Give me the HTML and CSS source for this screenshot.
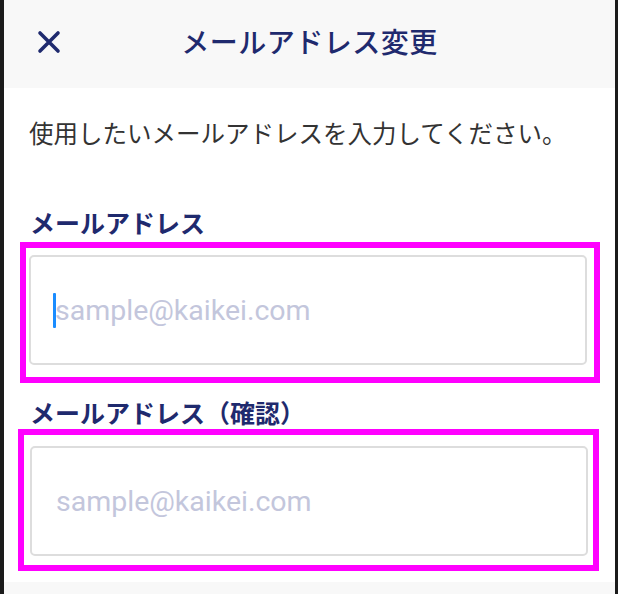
FILE: index.html
```html
<!DOCTYPE html>
<html lang="ja">
  <head>
    <meta charset="UTF-8" />
    <meta name="viewport" content="width=device-width, initial-scale=1.0" />
    <title>メールアドレス変更</title>
    <link rel="stylesheet" href="styles.css">
  </head>
  <body>
    <div class="screen">
      <header class="topbar">
        <button class="close-btn" aria-label="閉じる">
          <svg viewBox="0 0 24 24" width="24" height="24">
            <path d="M3 3 L21 21 M21 3 L3 21" />
          </svg>
        </button>
        <h1>メールアドレス変更</h1>
      </header>

      <main class="content">
        <p class="lead">使用したいメールアドレスを入力してください。</p>

        <label class="field-label" for="email">メールアドレス</label>
        <div class="field-wrap field-wrap-first">
          <div class="field">
            <span class="caret"></span>
            <input id="email" type="email" placeholder="sample@kaikei.com" />
          </div>
        </div>

        <label class="field-label field-label-second" for="email-confirm">メールアドレス（確認）</label>
        <div class="field-wrap field-wrap-second">
          <div class="field">
            <input id="email-confirm" type="email" placeholder="sample@kaikei.com" />
          </div>
        </div>
      </main>

      <div class="bottom-bar"></div>
    </div>
  </body>
</html>
```

FILE: styles.css
```css
:root {
  --navy: #1f2a6e;
  --text: #333333;
  --bar: #f8f8f8;
  --border: #dddddd;
  --placeholder: #c3c6dc;
  --mark: #ff00ff;
  --caret: #1a8cff;
}
html,
body {
  margin: 0;
  height: 100%;
}
body {
  background: #1b1b1b;
  padding: 0 3px 0 4px;
  box-sizing: border-box;
  font-family: "Noto Sans CJK JP", "Noto Sans", sans-serif;
}
.screen {
  background: #fff;
  height: 100%;
  display: flex;
  flex-direction: column;
}
.topbar {
  position: relative;
  height: 88px;
  background: var(--bar);
  display: flex;
  align-items: center;
  justify-content: center;
  flex-shrink: 0;
}
.topbar h1 {
  margin: 0 0 6px;
  font-size: 28px;
  font-weight: 500;
  color: var(--navy);
  letter-spacing: 0.5px;
}
.close-btn {
  position: absolute;
  left: 33px;
  top: 30px;
  background: none;
  border: none;
  padding: 0;
  width: 24px;
  height: 24px;
}
.close-btn svg {
  display: block;
}
.close-btn path {
  stroke: var(--navy);
  stroke-width: 3.6;
  stroke-linecap: round;
  fill: none;
}
.content {
  flex: 1;
  padding: 28px 15px 0 14px;
}
.lead {
  margin: 0;
  font-size: 24.5px;
  line-height: 34px;
  color: var(--text);
  padding-left: 11px;
}
.field-label {
  display: block;
  margin: 55px 0 3px;
  padding-left: 12px;
  font-size: 25px;
  line-height: 34px;
  font-weight: 700;
  color: var(--navy);
}
.field-label-second {
  margin-top: 12px;
  margin-bottom: 0;
}
.field-wrap {
  border: 6px solid var(--mark);
}
.field-wrap-first {
  margin: 0 0 0 2px;
  padding: 7px 7px 12px 3px;
}
.field-wrap-second {
  margin: 0 1px 0 0;
  padding: 11px 5px 9px 6px;
}
.field {
  position: relative;
}
.field input {
  display: block;
  width: 100%;
  box-sizing: border-box;
  height: 110px;
  border: 2px solid var(--border);
  border-radius: 5px;
  padding: 0 0 0 24px;
  font-family: Roboto, "Noto Sans", sans-serif;
  font-size: 28.5px;
  color: var(--text);
  background: #fff;
  outline: none;
}
.field input::placeholder {
  color: var(--placeholder);
}
.caret {
  position: absolute;
  left: 24px;
  top: 38px;
  width: 3px;
  height: 35px;
  background: var(--caret);
  border-radius: 1px;
}
.bottom-bar {
  height: 12px;
  background: var(--bar);
  flex-shrink: 0;
}
```
